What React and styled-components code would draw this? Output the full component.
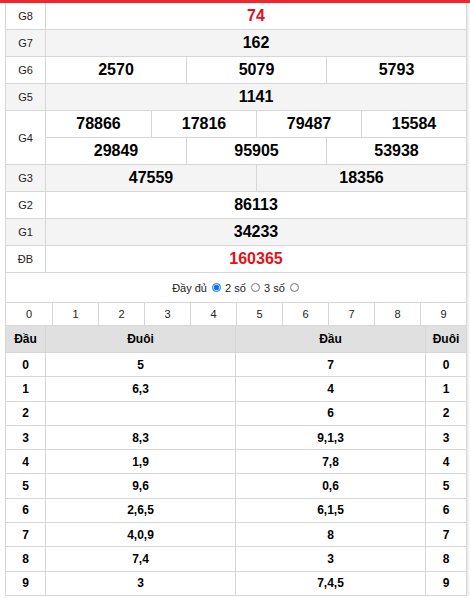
import React from 'react'
import styled, { createGlobalStyle } from 'styled-components'

const GlobalStyle = createGlobalStyle`
  html, body {
    margin: 0;
    padding: 0;
    background: #fff;
    font-family: "Liberation Sans", Arial, sans-serif;
    color: #000;
  }
`;

const prizes = [
  { label: 'G8', rows: [['74']], red: true },
  { label: 'G7', rows: [['162']] },
  { label: 'G6', rows: [['2570', '5079', '5793']] },
  { label: 'G5', rows: [['1141']] },
  { label: 'G4', rows: [['78866', '17816', '79487', '15584'], ['29849', '95905', '53938']] },
  { label: 'G3', rows: [['47559', '18356']] },
  { label: 'G2', rows: [['86113']] },
  { label: 'G1', rows: [['34233']] },
  { label: 'ĐB', rows: [['160365']], red: true },
];

const loto = [
  ['0', '5', '7', '0'],
  ['1', '6,3', '4', '1'],
  ['2', '', '6', '2'],
  ['3', '8,3', '9,1,3', '3'],
  ['4', '1,9', '7,8', '4'],
  ['5', '9,6', '0,6', '5'],
  ['6', '2,6,5', '6,1,5', '6'],
  ['7', '4,0,9', '8', '7'],
  ['8', '7,4', '3', '8'],
  ['9', '3', '7,4,5', '9'],
];

const App = () => {
  return (
    <>
      <GlobalStyle />
      <TopBar />
      <Box>
        {/* kết quả */}
        {prizes.map((p, i) => (
          <PrizeRow key={p.label} $alt={i % 2 === 1}>
            <Label>{p.label}</Label>
            <NumberStack>
              {p.rows.map((nums, j) => (
                <NumberLine key={j} $count={nums.length}>
                  {nums.map((n) => (
                    <Num key={n} $red={p.red}>{n}</Num>
                  ))}
                </NumberLine>
              ))}
            </NumberStack>
          </PrizeRow>
        ))}

        {/* chọn kiểu hiển thị */}
        <Options>
          Đầy đủ <Radio type="radio" name="mode" defaultChecked /> 2 số <Radio type="radio" name="mode" /> 3 số <Radio type="radio" name="mode" />
        </Options>

        <Digits>
          {Array.from({ length: 10 }, (_, i) => (
            <Digit key={i}>{i}</Digit>
          ))}
        </Digits>

        {/* loto đầu đuôi */}
        <Loto>
          <Head>Đầu</Head>
          <Head>Đuôi</Head>
          <Head>Đầu</Head>
          <Head>Đuôi</Head>
          {loto.map((r) =>
            r.map((v, k) => <Cell key={r[0] + '-' + k}>{v}</Cell>)
          )}
        </Loto>
      </Box>
    </>
  )
}

const TopBar = styled.div`
  height: 3px;
  background: #f2262c;
`;

const Box = styled.div`
  box-sizing: border-box;
  margin-left: 5px;
  width: 462px;
  border-left: 1px solid #d6d6d6;
  border-right: 1px solid #d6d6d6;
  box-shadow: 2px 1px 2px rgba(0, 0, 0, 0.08);
`;

const PrizeRow = styled.div`
  display: grid;
  grid-template-columns: 40px 1fr;
  background: ${(p) => (p.$alt ? '#f4f4f4' : '#fff')};
  border-bottom: 1px solid #d6d6d6;
`;

const Label = styled.div`
  display: flex;
  align-items: center;
  justify-content: center;
  border-right: 1px solid #d6d6d6;
  font-size: 11px;
  color: #222;
`;

const NumberStack = styled.div`
  display: flex;
  flex-direction: column;
`;

const NumberLine = styled.div`
  display: grid;
  grid-template-columns: repeat(${(p) => p.$count}, 1fr);
  height: 26px;

  & + & {
    border-top: 1px solid #d6d6d6;
  }
`;

const Num = styled.div`
  display: flex;
  align-items: center;
  justify-content: center;
  font-size: 16px;
  font-weight: bold;
  color: ${(p) => (p.$red ? '#e3101b' : '#000')};

  & + & {
    border-left: 1px solid #d6d6d6;
  }
`;

const Options = styled.div`
  display: flex;
  align-items: center;
  justify-content: center;
  height: 29px;
  font-size: 11px;
  color: #222;
  white-space: pre;
`;

const Radio = styled.input`
  width: 9px;
  height: 9px;
  margin: 0 1px 0 2px;
`;

const Digits = styled.div`
  display: grid;
  grid-template-columns: repeat(10, 1fr);
  border-top: 1px solid #d6d6d6;
  border-bottom: 1px solid #d6d6d6;
`;

const Digit = styled.div`
  height: 22px;
  display: flex;
  align-items: center;
  justify-content: center;
  font-size: 11px;
  color: #222;

  & + & {
    border-left: 1px solid #d6d6d6;
  }
`;

const Loto = styled.div`
  display: grid;
  grid-template-columns: 40px 1fr 1fr 40px;
  grid-auto-rows: 24.3px;
  grid-template-rows: 27px;
`;

const Head = styled.div`
  display: flex;
  align-items: center;
  justify-content: center;
  background: #e0e0e0;
  font-size: 12px;
  font-weight: bold;
  border-bottom: 1px solid #d6d6d6;

  &:not(:nth-child(4n)) {
    border-right: 1px solid #d6d6d6;
  }
`;

const Cell = styled.div`
  display: flex;
  align-items: center;
  justify-content: center;
  font-size: 12px;
  font-weight: bold;
  border-bottom: 1px solid #d6d6d6;

  &:not(:nth-child(4n)) {
    border-right: 1px solid #d6d6d6;
  }
`;

export default App
